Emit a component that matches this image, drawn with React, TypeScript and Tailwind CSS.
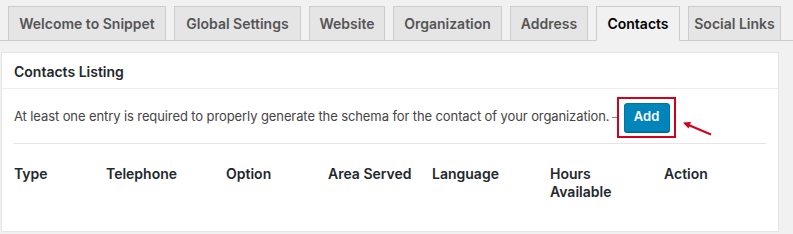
import React from "react";

const TABS = [
  { name: "Welcome to Snippet", width: "w-[158px]" },
  { name: "Global Settings", width: "w-[127px]" },
  { name: "Website", width: "w-[76px]" },
  { name: "Organization", width: "w-[109px]" },
  { name: "Address", width: "w-[78px]" },
  { name: "Contacts", width: "w-[84px]", active: true },
  { name: "Social Links", width: "w-[93px]" },
];

const COLUMNS = [
  { name: "Type", width: "w-[92px]" },
  { name: "Telephone", width: "w-[120px]" },
  { name: "Option", width: "w-[102px]" },
  { name: "Area Served", width: "w-[104px]" },
  { name: "Language", width: "w-[118px]" },
  { name: "Hours Available", width: "w-[114px] pr-[20px]" },
  { name: "Action", width: "flex-1" },
];

function Tabs() {
  return (
    <div className="flex gap-[8px] pl-[8px] pt-[6px] border-b border-[#cccccc]">
      {TABS.map((tab) => (
        <div
          key={tab.name}
          className={`${tab.width} h-[35px] -mb-px flex items-center justify-center border border-[#cccccc] text-[14px] font-semibold ${
            tab.active
              ? "bg-[#f1f1f1] border-b-[#f1f1f1] text-black"
              : "bg-[#e5e5e5] text-[#555555]"
          }`}
        >
          {tab.name}
        </div>
      ))}
    </div>
  );
}

function Arrow() {
  return (
    <svg
      className="absolute left-[681px] top-[119px]"
      width="32"
      height="18"
      viewBox="0 0 32 18"
    >
      <line x1="4" y1="4.5" x2="30" y2="15.5" stroke="#d0021b" strokeWidth="2" />
      <path d="M2 3.5 L10 3 L7.5 9.5 Z" fill="#d0021b" />
    </svg>
  );
}

export default function App() {
  return (
    <div
      className="relative w-[793px] h-[234px] bg-[#f1f1f1] overflow-hidden"
      style={{ fontFamily: "Inter, 'Noto Sans', sans-serif" }}
    >
      <Tabs />
      <div className="ml-[1px] mt-[11px] w-[778px] h-[180px] bg-white border border-[#e5e5e5]">
        <div className="h-[36px] px-[12px] pt-[1px] flex items-center border-b border-[#eeeeee] text-[14px] font-semibold text-[#23282d]">
          Contacts Listing
        </div>
        <div className="px-[12px]">
          <div className="h-[55px] pt-[2px] flex items-center border-b border-[#e5e5e5]">
            <span className="text-[13px] tracking-[-0.1px] text-[#444444]">
              At least one entry is required to properly generate the schema for the contact of your organization.
            </span>
            <span className="ml-[2px] w-[5px] h-px bg-[#888888]" />
            <div className="border-2 border-[#d0021b] pl-[5px] pr-[4px] py-[4px]">
              <button className="w-[46px] h-[29px] rounded-[3px] bg-[#0085ba] border border-[#0073aa] shadow-[0_1px_0_#006799] text-white text-[13px] font-semibold">
                Add
              </button>
            </div>
          </div>
          <div className="flex pt-[21px] text-[14px] leading-[18px] font-semibold text-[#23282d]">
            {COLUMNS.map((col) => (
              <div key={col.name} className={col.width}>
                {col.name}
              </div>
            ))}
          </div>
        </div>
      </div>
      <Arrow />
    </div>
  );
}
